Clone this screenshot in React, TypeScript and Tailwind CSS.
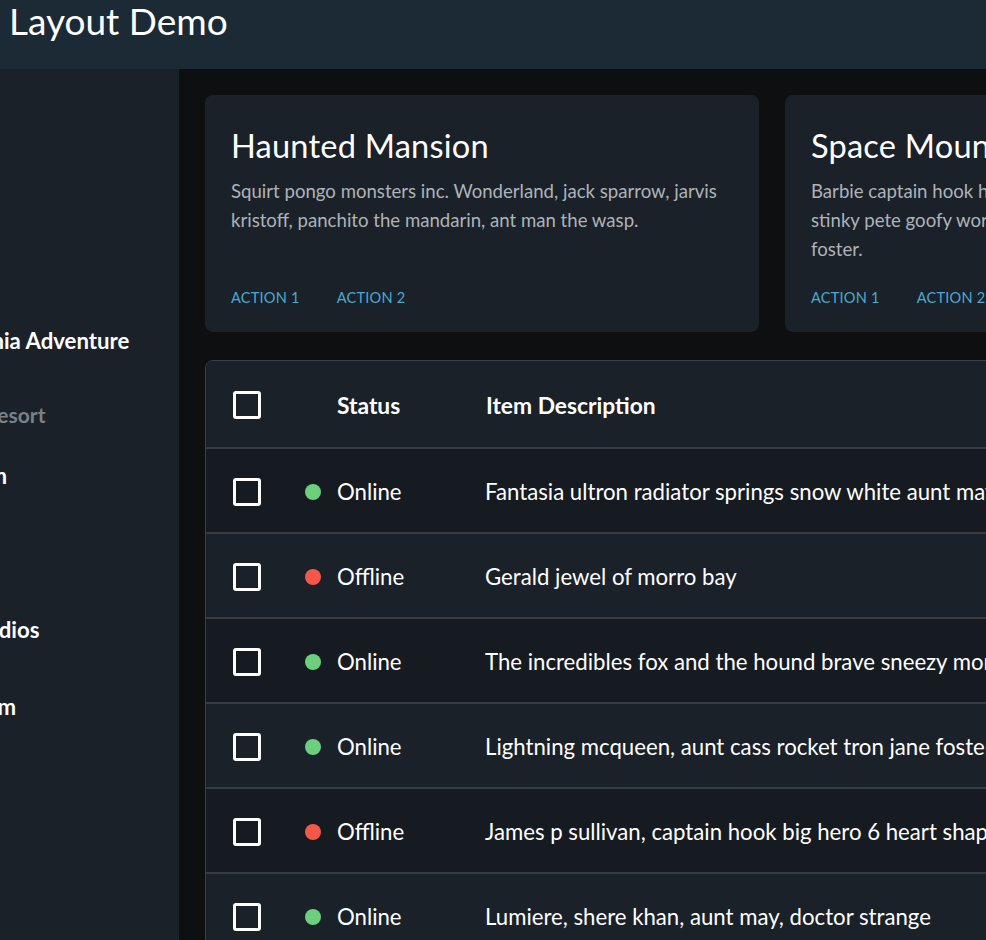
import React from "react";

const rows = [
  { on: true, text: "Fantasia ultron radiator springs snow white aunt may, bambi peter pan mickey mouse" },
  { on: false, text: "Gerald jewel of morro bay" },
  { on: true, text: "The incredibles fox and the hound brave sneezy monsters university tinker bell" },
  { on: true, text: "Lightning mcqueen, aunt cass rocket tron jane foster, cinderella dumbo" },
  { on: false, text: "James p sullivan, captain hook big hero 6 heart shaped box, hercules" },
  { on: true, text: "Lumiere, shere khan, aunt may, doctor strange" },
];

function Checkbox() {
  return <div className="w-[28px] h-[28px] border-[3px] border-white rounded-[3px] box-border" />;
}

function Card({ title, lines }: { title: string; lines: string[] }) {
  return (
    <div className="w-[554px] shrink-0 h-[237px] rounded-[8px] bg-[#1a2129] px-[26px] pt-[31px] flex flex-col">
      <div className="text-[32.6px] leading-[40px] text-white tracking-[0.2px]">{title}</div>
      <div className="mt-[11px] text-[18.6px] leading-[29px] text-[#aeb3b8]">
        {lines.map((l, i) => (
          <div key={i} className="whitespace-nowrap">{l}</div>
        ))}
      </div>
      <div className="mt-auto mb-[23px] flex gap-[37px] text-[14.6px] text-[#4aa9d2] tracking-[0.2px]">
        <span>ACTION 1</span>
        <span>ACTION 2</span>
      </div>
    </div>
  );
}

export default function App() {
  return (
    <div
      className="w-[986px] h-[940px] overflow-hidden flex flex-col bg-[#0e0f10]"
      style={{ fontFamily: "Lato, 'Noto Sans', sans-serif" }}
    >
      <header className="h-[69px] shrink-0 bg-[#1c2a35] flex items-start pl-[9px]">
        <h1 className="text-[37px] leading-[42px] text-white font-normal">Layout Demo</h1>
      </header>
      <div className="flex flex-1 min-h-0">
        <aside className="w-[179px] shrink-0 bg-[#1a2129] overflow-hidden pt-[233px]">
          <div className="-ml-[147px] w-[400px] text-white font-bold text-[22.2px]">
            <div className="h-[77px] flex items-center whitespace-nowrap">Disney California Adventure</div>
            <div className="h-[58px] pt-[14px] flex items-center whitespace-nowrap text-[#7b8188] text-[21px]">Disney World Resort</div>
            <div className="h-[77px] flex items-center whitespace-nowrap">Magic Kingdom</div>
            <div className="h-[77px] flex items-center whitespace-nowrap">Epcot</div>
            <div className="h-[77px] flex items-center whitespace-nowrap">Hollywood Studios</div>
            <div className="h-[77px] flex items-center whitespace-nowrap">Animal Kingdom</div>
          </div>
        </aside>
        <main className="flex-1 min-w-0 overflow-hidden pl-[26px] pt-[26px]">
          <div className="flex gap-[26px]">
            <Card
              title="Haunted Mansion"
              lines={[
                "Squirt pongo monsters inc. Wonderland, jack sparrow, jarvis",
                "kristoff, panchito the mandarin, ant man the wasp.",
              ]}
            />
            <Card
              title="Space Mountain"
              lines={[
                "Barbie captain hook hades, minnie mouse lightning",
                "stinky pete goofy worf, hercules peter pan jane",
                "foster.",
              ]}
            />
          </div>
          <div className="mt-[28px] w-[1200px] border border-[#3b4148] rounded-t-[8px] overflow-hidden">
            <div className="h-[88px] pt-[2px] bg-[#1a2129] flex items-center text-white font-bold text-[22.8px] border-b-2 border-[#363c43]">
              <div className="w-[100px] pl-[27px] flex items-center"><Checkbox /></div>
              <div className="w-[180px] pl-[31px]">Status</div>
              <div className="flex-1">Item Description</div>
            </div>
            {rows.map((r, i) => (
              <div
                key={i}
                className={`h-[85px] pt-[3px] flex items-center text-white text-[22.2px] border-b-2 border-[#363c43] ${i % 2 === 0 ? "bg-[#161b21]" : "bg-[#1a2129]"}`}
              >
                <div className="w-[100px] pl-[27px] flex items-center"><Checkbox /></div>
                <div className="w-[180px] flex items-center">
                  <span className="w-[16px] h-[16px] rounded-full shrink-0 ml-[-1px]" style={{ backgroundColor: r.on ? "#6ccf7c" : "#f5574a" }} />
                  <span className="ml-[16px]">{r.on ? "Online" : "Offline"}</span>
                </div>
                <div className="flex-1 whitespace-nowrap -ml-[1px]">{r.text}</div>
              </div>
            ))}
          </div>
        </main>
      </div>
    </div>
  );
}
